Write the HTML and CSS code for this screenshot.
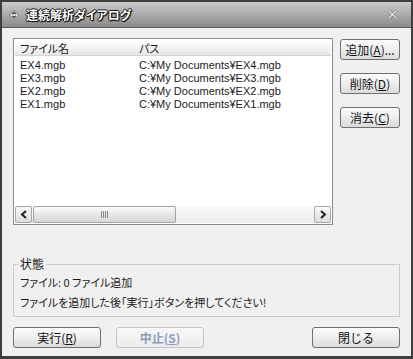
FILE: index.html
```html
<!DOCTYPE html>
<html lang="ja">
<head>
<meta charset="utf-8">
<link rel="stylesheet" href="styles.css">
</head>
<body>
<div class="window">
  <div class="titlebar">
    <svg class="ticon" width="10" height="10" viewBox="0 0 10 10">
      <path d="M5 0.5 L9.5 5 L5 9.5 L0.5 5 Z" fill="#e4e4e4" stroke="#6a6a6a" stroke-width="0.8"/>
      <path d="M3.3 4.2 L5 2.5 L6.7 4.2" fill="none" stroke="#333" stroke-width="1.1"/>
      <path d="M3.3 5.8 L5 7.5 L6.7 5.8" fill="none" stroke="#333" stroke-width="1.1"/>
    </svg>
    <span class="title">連続解析ダイアログ</span>
    <svg class="close" width="11" height="11" viewBox="0 0 11 11">
      <path d="M1.5 1.5 L9.5 9.5 M9.5 1.5 L1.5 9.5" stroke="#7a7a7a" stroke-width="2.6"/>
      <path d="M1.5 1.5 L9.5 9.5 M9.5 1.5 L1.5 9.5" stroke="#e6e6e6" stroke-width="1.3"/>
    </svg>
  </div>
  <div class="content">
    <div class="main">
      <div class="list">
        <div class="lhead">
          <span class="c1">ファイル名</span><span class="c2">パス</span>
        </div>
        <div class="rows">
          <div class="row"><span class="c1">EX4.mgb</span><span class="c2">C:¥My Documents¥EX4.mgb</span></div>
          <div class="row"><span class="c1">EX3.mgb</span><span class="c2">C:¥My Documents¥EX3.mgb</span></div>
          <div class="row"><span class="c1">EX2.mgb</span><span class="c2">C:¥My Documents¥EX2.mgb</span></div>
          <div class="row"><span class="c1">EX1.mgb</span><span class="c2">C:¥My Documents¥EX1.mgb</span></div>
        </div>
        <div class="hscroll">
          <div class="sbtn">
            <svg width="8" height="9" viewBox="0 0 8 9"><path d="M6 1 L2 4.5 L6 8" fill="none" stroke="#222" stroke-width="2"/></svg>
          </div>
          <div class="thumb"><span class="grip"></span></div>
          <div class="track"></div>
          <div class="sbtn">
            <svg width="8" height="9" viewBox="0 0 8 9"><path d="M2 1 L6 4.5 L2 8" fill="none" stroke="#222" stroke-width="2"/></svg>
          </div>
        </div>
      </div>
      <div class="side">
        <button class="btn sbtn2">追加(<u>A</u>)...</button>
        <button class="btn sbtn2">削除(<u>D</u>)</button>
        <button class="btn sbtn2">消去(<u>C</u>)</button>
      </div>
    </div>
    <fieldset class="group">
      <legend>状態</legend>
      <div class="line">ファイル: 0 ファイル追加</div>
      <div class="line">ファイルを追加した後「実行」ボタンを押してください!</div>
    </fieldset>
    <div class="bottom">
      <button class="btn wide">実行(<u>R</u>)</button>
      <button class="btn wide disabled">中止(<u>S</u>)</button>
      <span class="spacer"></span>
      <button class="btn wide">閉じる</button>
    </div>
  </div>
</div>
</body>
</html>
```
FILE: styles.css
```css
* { box-sizing: border-box; }
html, body { margin: 0; padding: 0; }
body {
  width: 413px;
  height: 359px;
  font-family: "Liberation Sans", "Noto Sans CJK JP", sans-serif;
  font-size: 11px;
  color: #1a1a1a;
  font-feature-settings: "palt";
}
.window {
  width: 413px;
  height: 359px;
  border: 2px solid #3e3e3e;
  border-bottom-width: 3px;
  background: #f0f0f0;
  display: flex;
  flex-direction: column;
}
.titlebar {
  height: 26px;
  flex: none;
  background: linear-gradient(#cbcbcb, #8a8a8a);
  border-bottom: 1px solid #5a5a5a;
  display: flex;
  align-items: center;
  padding: 0 13px 0 7px;
}
.ticon { flex: none; }
.title {
  margin-left: 7px;
  font-family: "Noto Sans CJK JP", sans-serif;
  font-weight: bold;
  font-size: 12px;
  color: #fff;
  text-shadow: 1px 0 0 #111, -1px 0 0 #111, 0 1px 0 #111, 0 -1px 0 #111, 1px 1px 1px #000;
}
.close { margin-left: auto; }
.content {
  flex: 1;
  padding: 10px 11px 0 11px;
  display: flex;
  flex-direction: column;
}
.main {
  display: flex;
  gap: 7px;
}
.list {
  width: 320px;
  height: 187px;
  border: 1px solid #8c8c8c;
  background: #fff;
  display: flex;
  flex-direction: column;
  padding: 1px;
}
.lhead {
  height: 16px;
  flex: none;
  display: flex;
  align-items: center;
  background: linear-gradient(#ffffff, #f1f1f1 60%, #e6e6e6);
  border-bottom: 1px solid #d4d4d4;
  font-family: "Noto Sans CJK JP", sans-serif;
  font-size: 11px;
}
.c1 { width: 124px; padding-left: 5px; flex: none; }
.c2 { flex: 1; }
.rows {
  flex: 1;
  padding-top: 2px;
}
.row {
  height: 13px;
  line-height: 14px;
  display: flex;
  font-size: 11px;
}
.hscroll {
  height: 17px;
  flex: none;
  display: flex;
  align-items: stretch;
  background: linear-gradient(#fafafa, #ececec);
}
.sbtn {
  width: 17px;
  flex: none;
  border: 1px solid #a8a8a8;
  border-radius: 2px;
  background: linear-gradient(#f8f8f8, #dcdcdc);
  display: flex;
  align-items: center;
  justify-content: center;
}
.thumb {
  width: 143px;
  flex: none;
  margin-left: 1px;
  border: 1px solid #a5a5a5;
  border-radius: 2px;
  background: linear-gradient(#fbfbfb, #e6e6e6 50%, #d6d6d6);
  display: flex;
  align-items: center;
  justify-content: center;
}
.grip {
  width: 7px;
  height: 7px;
  background: repeating-linear-gradient(90deg, #8a8a8a 0 1px, transparent 1px 2px);
}
.track { flex: 1; }
.side {
  display: flex;
  flex-direction: column;
  gap: 13px;
  padding-top: 1px;
}
.btn {
  font-family: "Noto Sans CJK JP", sans-serif;
  font-size: 12px;
  color: #111;
  height: 21px;
  padding: 0;
  border: 1px solid #707070;
  border-radius: 3px;
  background: linear-gradient(#fbfbfb, #eeeeee 50%, #dadada);
  display: flex;
  align-items: center;
  justify-content: center;
  line-height: 1;
}
.btn u { text-decoration-thickness: 1px; text-underline-offset: 1px; }
.sbtn2 { width: 60px; }
.group {
  margin: 32px 0 0 0;
  padding: 1px 6px 6px 6px;
  border: 1px solid #cbcbcb;
  width: 387px;
  height: 60px;
  font-family: "Noto Sans CJK JP", sans-serif;
  font-size: 11px;
}
.group legend {
  padding: 0 2px;
  margin-left: -2px;
  font-size: 12px;
  line-height: 14px;
}
.line {
  height: 20px;
  line-height: 20px;
}
.bottom {
  margin-top: 10px;
  display: flex;
  gap: 15px;
  width: 387px;
}
.wide { width: 88px; }
.spacer { flex: 1; }
.disabled {
  border-color: #c4c4c4;
  background: linear-gradient(#f8f8f8, #ececec);
  color: #8a9dbb;
  font-weight: bold;
}
```
